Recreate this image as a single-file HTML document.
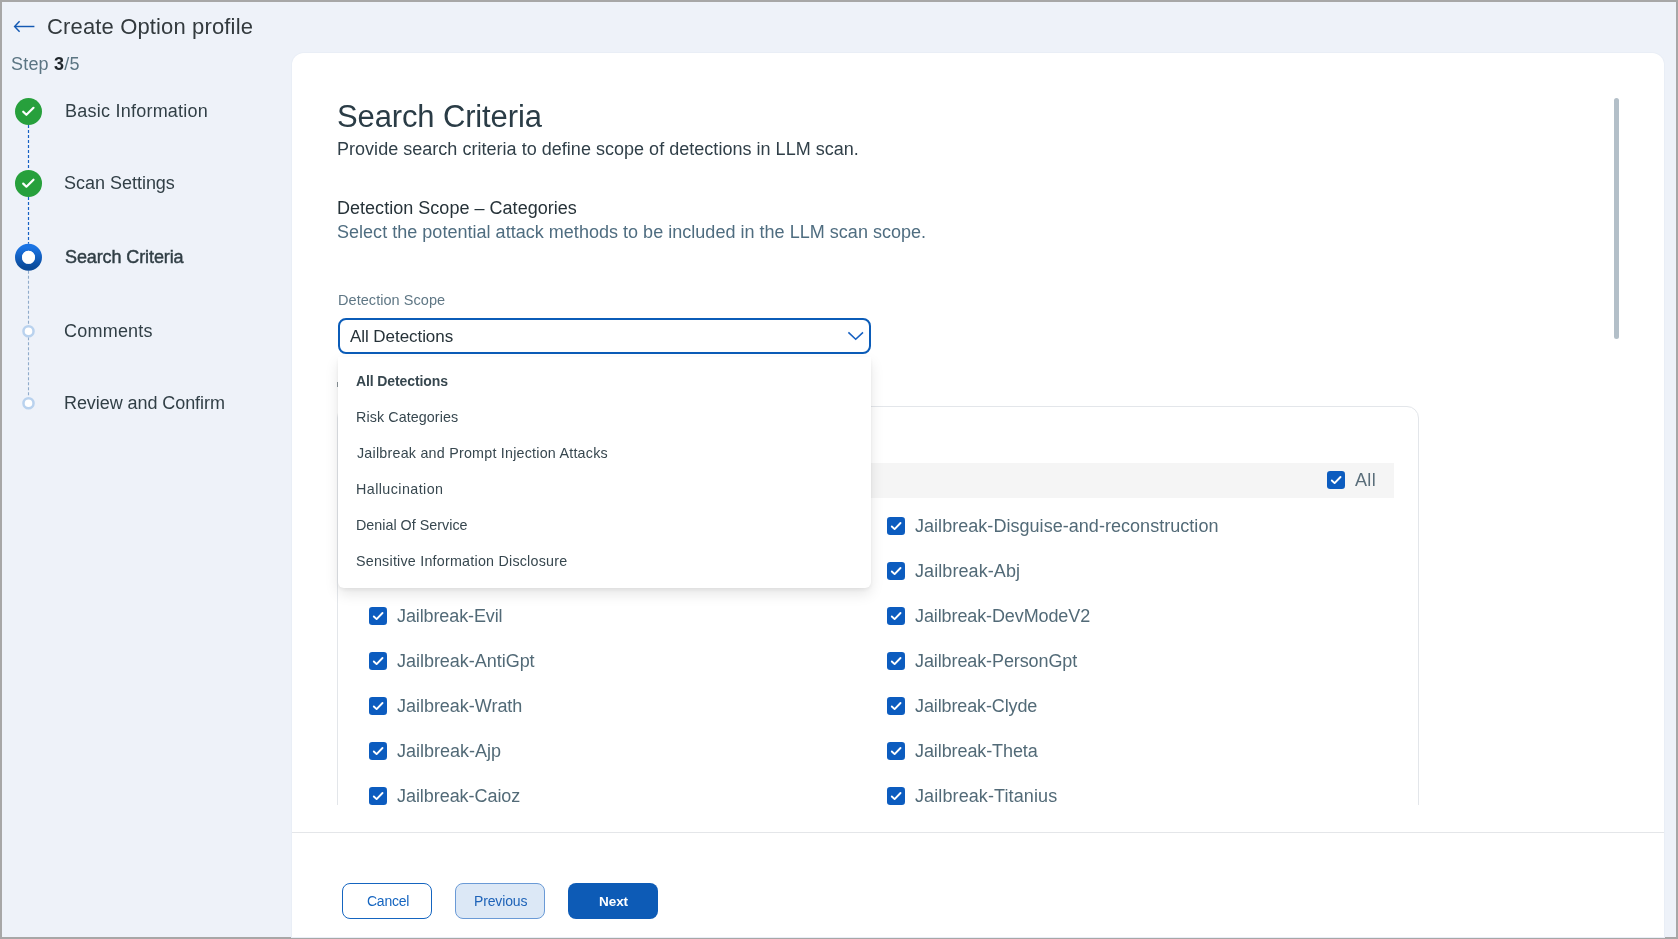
<!DOCTYPE html>
<html><head><meta charset="utf-8">
<style>
*{box-sizing:border-box;margin:0;padding:0}
html,body{width:1678px;height:939px;overflow:hidden;background:#a7a7a7;font-family:"Liberation Sans",sans-serif;position:relative}
.abs{position:absolute}
.t{position:absolute;white-space:nowrap;line-height:1;will-change:transform}
</style></head><body>
<div class="abs" style="left:2px;top:2px;width:1674px;height:935px;background:#eef2f9"></div>
<svg class="abs" style="left:12px;top:19px" width="26" height="16" viewBox="0 0 26 16">
  <path d="M3 7.5 H22.4" stroke="#1459b3" stroke-width="1.45" fill="none"/>
  <path d="M7.6 2.2 L2.6 7.5 L7.6 12.8" stroke="#1459b3" stroke-width="1.45" fill="none"/>
</svg>
<div class="t" style="left:47.08px;top:15.78px;font-size:22px;color:#333a3e;letter-spacing:0.145px;">Create Option profile</div>
<div class="t" style="left:10.80px;top:54.56px;font-size:18px;color:#5b7583;letter-spacing:0.2px;">Step <b style="color:#1f262b">3</b>/5</div>
<svg class="abs" style="left:0;top:0" width="60" height="430"><defs><linearGradient id="g1" x1="0" y1="0" x2="0" y2="1"><stop offset="0" stop-color="#1b74e4"/><stop offset="1" stop-color="#0a4a99"/></linearGradient></defs><line x1="28.5" y1="125.0" x2="28.5" y2="169.9" stroke="#1560c4" stroke-width="1.2" stroke-dasharray="3 2"/><line x1="28.5" y1="196.9" x2="28.5" y2="243.8" stroke="#1560c4" stroke-width="1.2" stroke-dasharray="3 2"/><line x1="28.5" y1="270.8" x2="28.5" y2="325.3" stroke="#8fabca" stroke-width="1.1" stroke-dasharray="3 2"/><line x1="28.5" y1="337.3" x2="28.5" y2="397.3" stroke="#8fabca" stroke-width="1.1" stroke-dasharray="3 2"/><circle cx="28.5" cy="111.5" r="13.5" fill="#27a03c"/><path d="M23.2 111.7 L26.4 114.8 L33.5 107.8" stroke="#fff" stroke-width="2.2" fill="none" stroke-linecap="round" stroke-linejoin="round"/><circle cx="28.5" cy="183.4" r="13.5" fill="#27a03c"/><path d="M23.2 183.6 L26.4 186.70000000000002 L33.5 179.70000000000002" stroke="#fff" stroke-width="2.2" fill="none" stroke-linecap="round" stroke-linejoin="round"/><circle cx="28.5" cy="257.3" r="10" fill="none" stroke="url(#g1)" stroke-width="7"/><circle cx="28.5" cy="257.3" r="6.5" fill="#fff"/><circle cx="28.5" cy="331.3" r="5.05" fill="#fff" stroke="#b9d2ee" stroke-width="2.5"/><circle cx="28.5" cy="403.3" r="5.05" fill="#fff" stroke="#b9d2ee" stroke-width="2.5"/></svg>
<div class="t" style="left:64.52px;top:102.36px;font-size:18px;color:#313f46;letter-spacing:0.237px;">Basic Information</div>
<div class="t" style="left:64.28px;top:174.36px;font-size:18px;color:#313f46;letter-spacing:-0.017px;">Scan Settings</div>
<div class="t" style="left:64.68px;top:248.26px;font-size:18px;color:#313f46;letter-spacing:-0.102px;-webkit-text-stroke:0.45px #313f46;">Search Criteria</div>
<div class="t" style="left:64.49px;top:322.26px;font-size:18px;color:#313f46;letter-spacing:0.221px;">Comments</div>
<div class="t" style="left:63.92px;top:394.26px;font-size:18px;color:#313f46;letter-spacing:-0.070px;">Review and Confirm</div>
<div class="abs" style="left:292px;top:52.5px;width:1372px;height:884.5px;background:#fff;border-radius:12px 12px 0 0;box-shadow:0 0 0 1px #e9eef6"></div>
<div class="t" style="left:336.59px;top:100.56px;font-size:31px;color:#2a3c46;letter-spacing:-0.131px;">Search Criteria</div>
<div class="t" style="left:336.52px;top:139.96px;font-size:18px;color:#303f48;letter-spacing:0.024px;">Provide search criteria to define scope of detections in LLM scan.</div>
<div class="t" style="left:336.72px;top:198.56px;font-size:18px;color:#263238;letter-spacing:0.025px;">Detection Scope – Categories</div>
<div class="t" style="left:337.18px;top:222.56px;font-size:18px;color:#4f6d80;letter-spacing:0.024px;">Select the potential attack methods to be included in the LLM scan scope.</div>
<div class="abs" style="left:1614px;top:98px;width:4.5px;height:240.5px;background:#b3bfc8;border-radius:3px"></div>
<div class="abs" style="left:292px;top:380px;width:1372px;height:425px;overflow:hidden"><div class="abs" style="left:45px;top:26.3px;width:1082px;height:600px;border:1px solid #e3e6ea;border-radius:12px;background:#fff"></div></div>
<div class="abs" style="left:362px;top:463px;width:1032px;height:34.5px;background:#f5f5f5"></div>
<svg class="abs" style="left:1327px;top:471px" width="18" height="18" viewBox="0 0 18 18"><rect x="0" y="0" width="18" height="18" rx="3.2" fill="#0c5cbf"/><path d="M4.8 9.5 L7.6 12.1 L13.5 6.0" stroke="#fff" stroke-width="1.9" fill="none" stroke-linecap="round" stroke-linejoin="round"/></svg>
<div class="t" style="left:1355.26px;top:471.06px;font-size:18px;color:#5a6e7a;letter-spacing:0.368px;">All</div>
<div class="abs" style="left:0;top:0;width:1678px;height:805px;overflow:hidden"><svg class="abs" style="left:369px;top:516.8px" width="18" height="18" viewBox="0 0 18 18"><rect x="0" y="0" width="18" height="18" rx="3.2" fill="#0c5cbf"/><path d="M4.8 9.5 L7.6 12.1 L13.5 6.0" stroke="#fff" stroke-width="1.9" fill="none" stroke-linecap="round" stroke-linejoin="round"/></svg>
<div class="t" style="left:397.10px;top:516.86px;font-size:18px;color:#526a77;">Jailbreak-Dan</div>
<svg class="abs" style="left:887px;top:516.8px" width="18" height="18" viewBox="0 0 18 18"><rect x="0" y="0" width="18" height="18" rx="3.2" fill="#0c5cbf"/><path d="M4.8 9.5 L7.6 12.1 L13.5 6.0" stroke="#fff" stroke-width="1.9" fill="none" stroke-linecap="round" stroke-linejoin="round"/></svg>
<div class="t" style="left:914.72px;top:516.86px;font-size:18px;color:#526a77;letter-spacing:0.037px;">Jailbreak-Disguise-and-reconstruction</div>
<svg class="abs" style="left:369px;top:561.8px" width="18" height="18" viewBox="0 0 18 18"><rect x="0" y="0" width="18" height="18" rx="3.2" fill="#0c5cbf"/><path d="M4.8 9.5 L7.6 12.1 L13.5 6.0" stroke="#fff" stroke-width="1.9" fill="none" stroke-linecap="round" stroke-linejoin="round"/></svg>
<div class="t" style="left:397.10px;top:561.86px;font-size:18px;color:#526a77;">Jailbreak-Aim</div>
<svg class="abs" style="left:887px;top:561.8px" width="18" height="18" viewBox="0 0 18 18"><rect x="0" y="0" width="18" height="18" rx="3.2" fill="#0c5cbf"/><path d="M4.8 9.5 L7.6 12.1 L13.5 6.0" stroke="#fff" stroke-width="1.9" fill="none" stroke-linecap="round" stroke-linejoin="round"/></svg>
<div class="t" style="left:914.72px;top:561.86px;font-size:18px;color:#526a77;letter-spacing:0.079px;">Jailbreak-Abj</div>
<svg class="abs" style="left:369px;top:606.8px" width="18" height="18" viewBox="0 0 18 18"><rect x="0" y="0" width="18" height="18" rx="3.2" fill="#0c5cbf"/><path d="M4.8 9.5 L7.6 12.1 L13.5 6.0" stroke="#fff" stroke-width="1.9" fill="none" stroke-linecap="round" stroke-linejoin="round"/></svg>
<div class="t" style="left:397.32px;top:606.86px;font-size:18px;color:#526a77;letter-spacing:-0.111px;">Jailbreak-Evil</div>
<svg class="abs" style="left:887px;top:606.8px" width="18" height="18" viewBox="0 0 18 18"><rect x="0" y="0" width="18" height="18" rx="3.2" fill="#0c5cbf"/><path d="M4.8 9.5 L7.6 12.1 L13.5 6.0" stroke="#fff" stroke-width="1.9" fill="none" stroke-linecap="round" stroke-linejoin="round"/></svg>
<div class="t" style="left:914.72px;top:606.86px;font-size:18px;color:#526a77;letter-spacing:-0.105px;">Jailbreak-DevModeV2</div>
<svg class="abs" style="left:369px;top:651.8px" width="18" height="18" viewBox="0 0 18 18"><rect x="0" y="0" width="18" height="18" rx="3.2" fill="#0c5cbf"/><path d="M4.8 9.5 L7.6 12.1 L13.5 6.0" stroke="#fff" stroke-width="1.9" fill="none" stroke-linecap="round" stroke-linejoin="round"/></svg>
<div class="t" style="left:397.32px;top:651.86px;font-size:18px;color:#526a77;letter-spacing:-0.028px;">Jailbreak-AntiGpt</div>
<svg class="abs" style="left:887px;top:651.8px" width="18" height="18" viewBox="0 0 18 18"><rect x="0" y="0" width="18" height="18" rx="3.2" fill="#0c5cbf"/><path d="M4.8 9.5 L7.6 12.1 L13.5 6.0" stroke="#fff" stroke-width="1.9" fill="none" stroke-linecap="round" stroke-linejoin="round"/></svg>
<div class="t" style="left:914.72px;top:651.86px;font-size:18px;color:#526a77;letter-spacing:-0.103px;">Jailbreak-PersonGpt</div>
<svg class="abs" style="left:369px;top:696.8px" width="18" height="18" viewBox="0 0 18 18"><rect x="0" y="0" width="18" height="18" rx="3.2" fill="#0c5cbf"/><path d="M4.8 9.5 L7.6 12.1 L13.5 6.0" stroke="#fff" stroke-width="1.9" fill="none" stroke-linecap="round" stroke-linejoin="round"/></svg>
<div class="t" style="left:397.32px;top:696.86px;font-size:18px;color:#526a77;letter-spacing:-0.026px;">Jailbreak-Wrath</div>
<svg class="abs" style="left:887px;top:696.8px" width="18" height="18" viewBox="0 0 18 18"><rect x="0" y="0" width="18" height="18" rx="3.2" fill="#0c5cbf"/><path d="M4.8 9.5 L7.6 12.1 L13.5 6.0" stroke="#fff" stroke-width="1.9" fill="none" stroke-linecap="round" stroke-linejoin="round"/></svg>
<div class="t" style="left:914.72px;top:696.86px;font-size:18px;color:#526a77;letter-spacing:-0.119px;">Jailbreak-Clyde</div>
<svg class="abs" style="left:369px;top:741.8px" width="18" height="18" viewBox="0 0 18 18"><rect x="0" y="0" width="18" height="18" rx="3.2" fill="#0c5cbf"/><path d="M4.8 9.5 L7.6 12.1 L13.5 6.0" stroke="#fff" stroke-width="1.9" fill="none" stroke-linecap="round" stroke-linejoin="round"/></svg>
<div class="t" style="left:397.32px;top:741.86px;font-size:18px;color:#526a77;">Jailbreak-Ajp</div>
<svg class="abs" style="left:887px;top:741.8px" width="18" height="18" viewBox="0 0 18 18"><rect x="0" y="0" width="18" height="18" rx="3.2" fill="#0c5cbf"/><path d="M4.8 9.5 L7.6 12.1 L13.5 6.0" stroke="#fff" stroke-width="1.9" fill="none" stroke-linecap="round" stroke-linejoin="round"/></svg>
<div class="t" style="left:914.72px;top:741.86px;font-size:18px;color:#526a77;letter-spacing:-0.091px;">Jailbreak-Theta</div>
<svg class="abs" style="left:369px;top:786.8px" width="18" height="18" viewBox="0 0 18 18"><rect x="0" y="0" width="18" height="18" rx="3.2" fill="#0c5cbf"/><path d="M4.8 9.5 L7.6 12.1 L13.5 6.0" stroke="#fff" stroke-width="1.9" fill="none" stroke-linecap="round" stroke-linejoin="round"/></svg>
<div class="t" style="left:397.32px;top:786.86px;font-size:18px;color:#526a77;letter-spacing:-0.055px;">Jailbreak-Caioz</div>
<svg class="abs" style="left:887px;top:786.8px" width="18" height="18" viewBox="0 0 18 18"><rect x="0" y="0" width="18" height="18" rx="3.2" fill="#0c5cbf"/><path d="M4.8 9.5 L7.6 12.1 L13.5 6.0" stroke="#fff" stroke-width="1.9" fill="none" stroke-linecap="round" stroke-linejoin="round"/></svg>
<div class="t" style="left:914.72px;top:786.86px;font-size:18px;color:#526a77;letter-spacing:0.103px;">Jailbreak-Titanius</div>
</div>
<div class="abs" style="left:337px;top:382px;width:1px;height:5px;background:#8a9399"></div>
<div class="t" style="left:338.01px;top:293.03px;font-size:14.5px;color:#5f7785;letter-spacing:0.052px;">Detection Scope</div>
<div class="abs" style="left:338px;top:318px;width:533px;height:36px;border:2px solid #0b5cb8;border-radius:8px;background:#fff"></div>
<div class="t" style="left:349.97px;top:328.01px;font-size:17px;color:#263238;letter-spacing:-0.061px;">All Detections</div>
<svg class="abs" style="left:846px;top:329px" width="20" height="14" viewBox="0 0 20 14"><path d="M2.4 3.4 L9.7 10.3 L17.0 3.4" stroke="#1560c2" stroke-width="1.55" fill="none"/></svg>
<div class="abs" style="left:338px;top:357px;width:533px;height:230.5px;background:#fff;border-radius:0 0 6px 6px;box-shadow:0 6px 14px rgba(0,0,0,0.10),0 2px 4px rgba(0,0,0,0.06)"></div>
<div class="t" style="left:356.05px;top:373.85px;font-size:14px;color:#37474f;font-weight:bold;letter-spacing:-0.110px;">All Detections</div>
<div class="t" style="left:355.93px;top:410.30px;font-size:14.3px;color:#37474f;letter-spacing:0.091px;">Risk Categories</div>
<div class="t" style="left:356.88px;top:446.30px;font-size:14.3px;color:#37474f;letter-spacing:0.224px;">Jailbreak and Prompt Injection Attacks</div>
<div class="t" style="left:355.93px;top:482.30px;font-size:14.3px;color:#37474f;letter-spacing:0.429px;">Hallucination</div>
<div class="t" style="left:355.93px;top:518.30px;font-size:14.3px;color:#37474f;letter-spacing:0.017px;">Denial Of Service</div>
<div class="t" style="left:356.45px;top:554.30px;font-size:14.3px;color:#37474f;letter-spacing:0.225px;">Sensitive Information Disclosure</div>
<div class="abs" style="left:292px;top:832px;width:1372px;height:1px;background:#e4e6e9"></div>
<div class="abs" style="left:342px;top:883px;width:90px;height:36px;border:1.5px solid #1565c0;border-radius:8px;background:#fff"></div>
<div class="t" style="left:366.79px;top:894.45px;font-size:14px;color:#1565c0;letter-spacing:-0.246px;">Cancel</div>
<div class="abs" style="left:455px;top:883px;width:90px;height:36px;border:1px solid #6a9ad6;border-radius:8px;background:#dce8f6"></div>
<div class="t" style="left:473.85px;top:894.45px;font-size:14px;color:#1e63b8;letter-spacing:-0.145px;">Previous</div>
<div class="abs" style="left:568px;top:883px;width:90px;height:36px;border-radius:8px;background:#0d5bb6"></div>
<div class="t" style="left:598.60px;top:894.87px;font-size:13.5px;color:#ffffff;font-weight:bold;letter-spacing:-0.064px;">Next</div>
</body></html>
